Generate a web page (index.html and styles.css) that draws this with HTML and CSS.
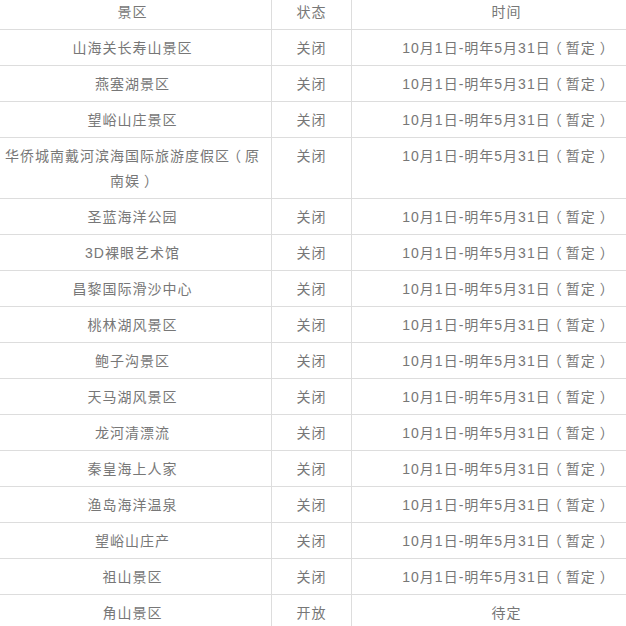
FILE: index.html
```html
<!DOCTYPE html>
<html lang="zh-CN">
<head>
<meta charset="utf-8">
<link rel="stylesheet" href="styles.css">
</head>
<body>
<div class="frame">
<table class="scenic">
<colgroup><col class="c1"><col class="c2"><col class="c3"></colgroup>
<thead>
<tr><th>景区</th><th>状态</th><th>时间</th></tr>
</thead>
<tbody>
<tr><td>山海关长寿山景区</td><td>关闭</td><td>10月1日-明年5月31日<span class="p">（</span>暂定<span class="p">）</span></td></tr>
<tr><td>燕塞湖景区</td><td>关闭</td><td>10月1日-明年5月31日<span class="p">（</span>暂定<span class="p">）</span></td></tr>
<tr><td>望峪山庄景区</td><td>关闭</td><td>10月1日-明年5月31日<span class="p">（</span>暂定<span class="p">）</span></td></tr>
<tr><td>华侨城南戴河滨海国际旅游度假区<span class="p">（</span>原南娱<span class="p">）</span></td><td>关闭</td><td>10月1日-明年5月31日<span class="p">（</span>暂定<span class="p">）</span></td></tr>
<tr><td>圣蓝海洋公园</td><td>关闭</td><td>10月1日-明年5月31日<span class="p">（</span>暂定<span class="p">）</span></td></tr>
<tr><td>3D裸眼艺术馆</td><td>关闭</td><td>10月1日-明年5月31日<span class="p">（</span>暂定<span class="p">）</span></td></tr>
<tr><td>昌黎国际滑沙中心</td><td>关闭</td><td>10月1日-明年5月31日<span class="p">（</span>暂定<span class="p">）</span></td></tr>
<tr><td>桃林湖风景区</td><td>关闭</td><td>10月1日-明年5月31日<span class="p">（</span>暂定<span class="p">）</span></td></tr>
<tr><td>鲍子沟景区</td><td>关闭</td><td>10月1日-明年5月31日<span class="p">（</span>暂定<span class="p">）</span></td></tr>
<tr><td>天马湖风景区</td><td>关闭</td><td>10月1日-明年5月31日<span class="p">（</span>暂定<span class="p">）</span></td></tr>
<tr><td>龙河清漂流</td><td>关闭</td><td>10月1日-明年5月31日<span class="p">（</span>暂定<span class="p">）</span></td></tr>
<tr><td>秦皇海上人家</td><td>关闭</td><td>10月1日-明年5月31日<span class="p">（</span>暂定<span class="p">）</span></td></tr>
<tr><td>渔岛海洋温泉</td><td>关闭</td><td>10月1日-明年5月31日<span class="p">（</span>暂定<span class="p">）</span></td></tr>
<tr><td>望峪山庄产</td><td>关闭</td><td>10月1日-明年5月31日<span class="p">（</span>暂定<span class="p">）</span></td></tr>
<tr><td>祖山景区</td><td>关闭</td><td>10月1日-明年5月31日<span class="p">（</span>暂定<span class="p">）</span></td></tr>
<tr><td>角山景区</td><td>开放</td><td>待定</td></tr>
</tbody>
</table>
</div>
</body>
</html>
```
FILE: styles.css
```css
html, body {
  margin: 0;
  padding: 0;
  background: #fff;
}
.frame {
  width: 626px;
  height: 626px;
  overflow: hidden;
}
.scenic {
  margin: -7px 0 0 -7px;
  width: 668px;
  table-layout: fixed;
  border-collapse: collapse;
  font-family: "Liberation Sans", "Noto Sans CJK SC", sans-serif;
  font-size: 14px;
  letter-spacing: 1px;
  color: #777;
}
.c1 { width: 278px; }
.c2 { width: 80px; }
.c3 { width: 310px; }
.scenic th,
.scenic td {
  border: 1px solid #ddd;
  padding: 6px 4px 4px;
  line-height: 25px;
  text-align: center;
  vertical-align: top;
  font-weight: normal;
}
.p {
  display: inline-block;
  width: 15px;
  text-align: center;
  letter-spacing: 0;
  font-feature-settings: "halt" 1;
}
```
